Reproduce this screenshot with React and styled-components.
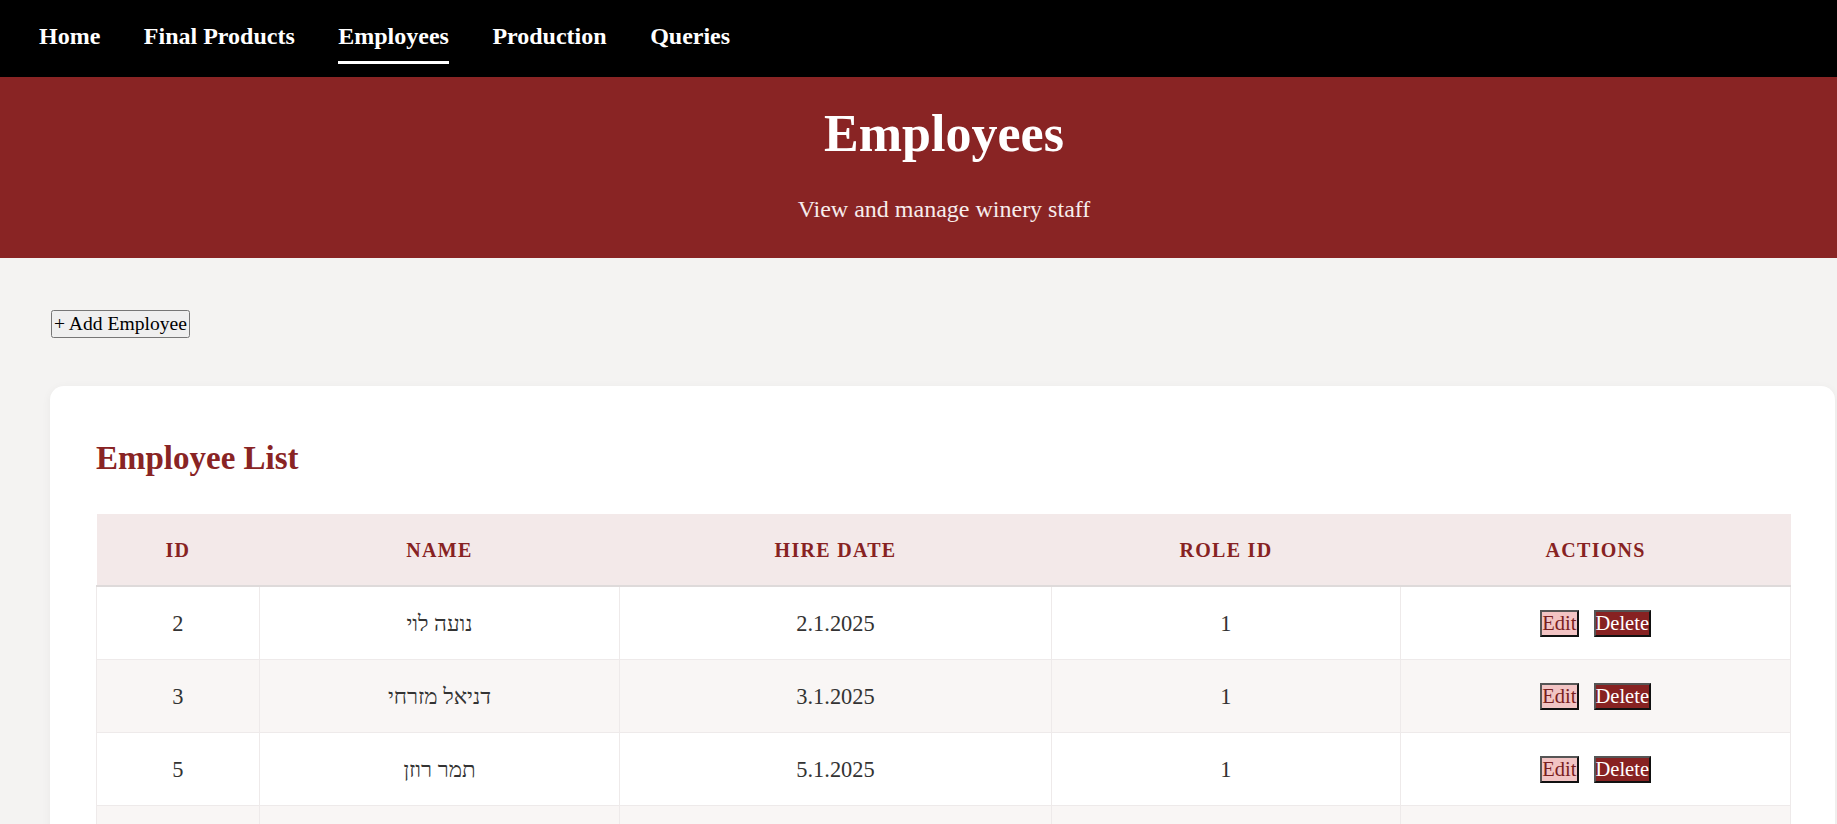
import React from "react";
import styled, { createGlobalStyle } from "styled-components";

const GlobalStyle = createGlobalStyle`
  html, body {
    margin: 0;
    padding: 0;
    background: #f4f3f2;
    font-family: "Liberation Serif", "Times New Roman", serif;
    overflow-x: hidden;
  }
  * { box-sizing: border-box; }
`;

const Nav = styled.nav`
  height: 77px;
  background: #000;
  display: flex;
  align-items: flex-start;
  gap: 43.5px;
  padding: 23px 0 0 39px;
`;

const NavLink = styled.a`
  color: #fff;
  font-size: 24px;
  font-weight: bold;
  text-decoration: none;
  line-height: 27px;
  padding-bottom: 11px;
  border-bottom: 3px solid ${(p) => (p.$active ? "#fff" : "transparent")};
  cursor: pointer;
`;

const Hero = styled.header`
  background: #892424;
  color: #fff;
  text-align: center;
  padding: 28px 0 35px 51px;
`;

const HeroTitle = styled.h1`
  margin: 0 0 33px;
  font-size: 52px;
  font-weight: bold;
  line-height: 58px;
`;

const HeroSubtitle = styled.p`
  margin: 0;
  font-size: 24px;
  line-height: 27px;
  color: #f7ecec;
`;

const Main = styled.main`
  padding: 52px 2px 0 50px;
`;

const AddButton = styled.button`
  font-family: inherit;
  font-size: 19.6px;
  line-height: 22px;
  padding: 1px 1px;
  margin-left: 1px;
  color: #000;
`;

const Card = styled.section`
  margin-top: 48px;
  background: #fff;
  border-radius: 14px;
  box-shadow: 0 2px 10px rgba(0, 0, 0, 0.05);
  padding: 54px 44px 46px 46px;
`;

const CardTitle = styled.h2`
  margin: 0 0 37px;
  color: #892424;
  font-size: 33px;
  font-weight: bold;
  line-height: 37px;
`;

const Table = styled.table`
  width: 100%;
  border-collapse: collapse;
  table-layout: fixed;
`;

const HeadCell = styled.th`
  width: ${(p) => p.$w};
  background: #f3e9e9;
  color: #872222;
  font-size: 20px;
  font-weight: bold;
  text-transform: uppercase;
  letter-spacing: 1.3px;
  line-height: 22px;
  padding: 24.5px 12px;
  text-align: center;
  border-bottom: 2px solid #dedada;
`;

const Row = styled.tr`
  background: ${(p) => (p.$alt ? "#f9f6f5" : "#fff")};
`;

const Cell = styled.td`
  font-size: 22.4px;
  line-height: 25px;
  color: #333;
  text-align: center;
  padding: 23.5px 12px;
  border: 1px solid #eeeaea;
`;

const ActionGroup = styled.div`
  height: 25px;
  display: flex;
  justify-content: center;
  align-items: center;
  gap: 15px;
`;

const ActionButton = styled.button`
  font-family: inherit;
  font-size: 20.5px;
  line-height: 23px;
  padding: 0;
  border-style: solid;
  border-width: 2px;
  border-color: #555 #111 #111 #555;
  background: ${(p) => (p.$danger ? "#872222" : "#f2c4c4")};
  color: ${(p) => (p.$danger ? "#fff" : "#7a1e1e")};
  cursor: pointer;
  white-space: nowrap;
`;

const employees = [
  { id: 2, name: "נועה לוי", date: "2.1.2025", role: 1 },
  { id: 3, name: "דניאל מזרחי", date: "3.1.2025", role: 1 },
  { id: 5, name: "תמר רוזן", date: "5.1.2025", role: 1 },
  { id: 6, name: "יוסי כהן", date: "6.1.2025", role: 2 },
  { id: 7, name: "מיכל אברהם", date: "7.1.2025", role: 2 },
];

const columns = [
  { label: "ID", w: "9.6%" },
  { label: "Name", w: "21.3%" },
  { label: "Hire Date", w: "25.45%" },
  { label: "Role ID", w: "20.65%" },
  { label: "Actions", w: "23%" },
];

export default function App() {
  return (
    <>
      <GlobalStyle />
      <Nav>
        <NavLink>Home</NavLink>
        <NavLink>Final Products</NavLink>
        <NavLink $active>Employees</NavLink>
        <NavLink>Production</NavLink>
        <NavLink>Queries</NavLink>
      </Nav>
      <Hero>
        <HeroTitle>Employees</HeroTitle>
        <HeroSubtitle>View and manage winery staff</HeroSubtitle>
      </Hero>
      <Main>
        <AddButton>+ Add Employee</AddButton>
        <Card>
          <CardTitle>Employee List</CardTitle>
          <Table>
            <thead>
              <tr>
                {columns.map((c) => (
                  <HeadCell key={c.label} $w={c.w}>
                    {c.label}
                  </HeadCell>
                ))}
              </tr>
            </thead>
            <tbody>
              {employees.map((e, i) => (
                <Row key={e.id} $alt={i % 2 === 1}>
                  <Cell>{e.id}</Cell>
                  <Cell>{e.name}</Cell>
                  <Cell>{e.date}</Cell>
                  <Cell>{e.role}</Cell>
                  <Cell>
                    <ActionGroup>
                      <ActionButton>Edit</ActionButton>
                      <ActionButton $danger>Delete</ActionButton>
                    </ActionGroup>
                  </Cell>
                </Row>
              ))}
            </tbody>
          </Table>
        </Card>
      </Main>
    </>
  );
}
